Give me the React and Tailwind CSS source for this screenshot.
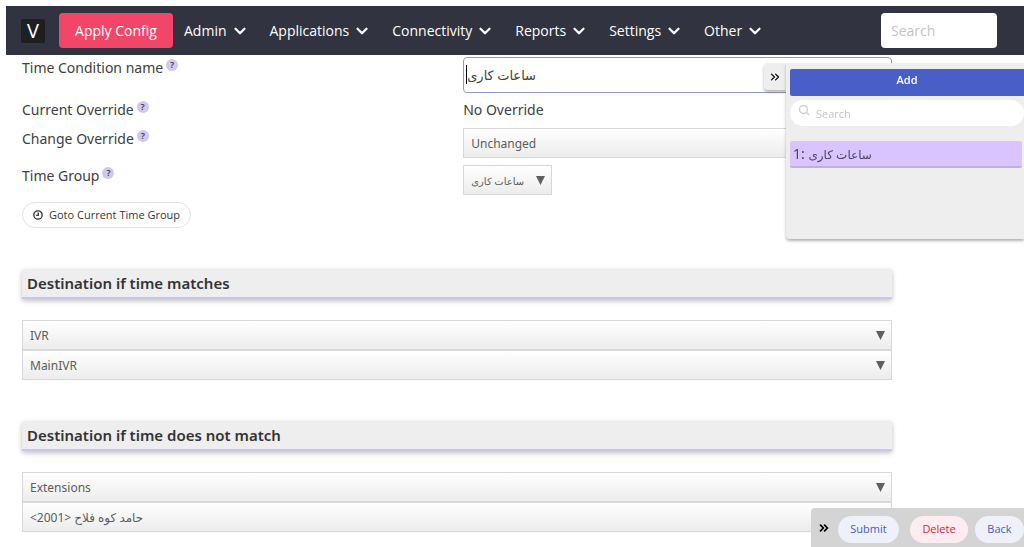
import React, { useState } from "react";
import { ChevronDown, ChevronsRight, Search } from "lucide-react";

const menus = ["Admin", "Applications", "Connectivity", "Reports", "Settings", "Other"];

function Help({ topic }) {
  return (
    <button
      type="button"
      aria-label={`Help: ${topic}`}
      className="mt-0.5 ml-[3px] flex size-3 items-center justify-center rounded-full bg-[#d0c9ee] text-[9px] leading-3 font-semibold text-[#3c3760]"
    >
      ?
    </button>
  );
}

function Label({ htmlFor, children }) {
  return (
    <div className="flex items-start">
      <label htmlFor={htmlFor} className="text-sm leading-[22px]">
        {children}
      </label>
      <Help topic={children} />
    </div>
  );
}

function ClockIcon() {
  return (
    <svg
      viewBox="0 0 12 12"
      aria-hidden="true"
      className="size-2.5 fill-none stroke-current stroke-[1.6]"
    >
      <circle cx="6" cy="6" r="5" />
      <path d="M6.3 3v3.5H3.8" />
    </svg>
  );
}

function Select({ id, label, options, small }) {
  return (
    <div className={small ? "relative w-[89px]" : "relative w-full"}>
      <select
        id={id}
        aria-label={label}
        className={`block h-[30px] w-full appearance-none border border-[#d8d8d8] bg-linear-to-b from-white to-[#ececec] pt-0.5 pl-[7px] text-[#5c5c5c] outline-none ${
          small ? "text-[10px]" : "text-xs"
        }`}
      >
        {options.map((option) => (
          <option key={option}>{option}</option>
        ))}
      </select>
      <svg
        viewBox="0 0 8 8"
        aria-hidden="true"
        className="pointer-events-none absolute top-[11px] right-[7px] size-[9px] fill-[#5f5f5f]"
      >
        <path d="M0 0h8L4 8z" />
      </svg>
    </div>
  );
}

function SectionTitle({ children }) {
  return (
    <h2 className="rounded-t-xs border-b-2 border-[#cbc6ea] bg-[#eeeeee] px-[5px] py-px text-[15px] leading-[26px] font-semibold text-[#333] shadow-[0_2px_5px_rgba(0,0,0,0.25)]">
      {children}
    </h2>
  );
}

function Header() {
  return (
    <header className="mt-1.5 ml-1.5 flex h-[49px] items-center bg-[#313340] pr-[27px] pl-[15px] font-['Open_Sans','Noto_Sans',sans-serif] text-white">
      <a
        href="#home"
        className="flex size-6 items-center justify-center rounded-xs bg-[#1e1f20] text-xl leading-6"
      >
        V
      </a>
      <button type="button" className="ml-3.5 h-[35px] w-[114px] rounded-sm bg-[#f14668] text-sm">
        Apply Config
      </button>
      <nav className="ml-[11px] flex gap-[21px]">
        {menus.map((menu) => (
          <button key={menu} type="button" className="flex items-center gap-1 text-sm">
            {menu}
            <ChevronDown size={18} strokeWidth={3} />
          </button>
        ))}
      </nav>
      <input
        type="search"
        aria-label="Search menu"
        placeholder="Search"
        className="ml-auto h-[35px] w-[116px] rounded-sm bg-white px-2.5 text-sm text-[#363636] outline-none placeholder:text-[#c4c4c8]"
      />
    </header>
  );
}

function SidePanel() {
  return (
    <aside className="fixed top-[63px] right-0 flex items-start">
      <button
        type="button"
        aria-label="Hide list"
        className="flex h-[27px] w-[22px] items-center justify-center rounded-l-sm bg-[#eeeeee] text-black shadow-[0_2px_3px_rgba(0,0,0,0.3)]"
      >
        <ChevronsRight size={14} strokeWidth={2} />
      </button>
      <div className="relative h-[176px] w-[238px] rounded-bl-sm bg-[#eeeeee] pt-1.5 pl-1 font-['Open_Sans','Noto_Sans',sans-serif] shadow-[0_2px_3px_rgba(0,0,0,0.3)]">
        <a
          href="#add"
          className="block h-[27px] rounded-l-xs bg-[#485fc7] text-center text-[11px] leading-[22px] font-semibold text-white"
        >
          Add
        </a>
        <div className="relative mt-1">
          <Search size={12} strokeWidth={3} className="absolute top-1 left-2 text-[#d0d0d0]" />
          <input
            type="search"
            aria-label="Search time conditions"
            placeholder="Search"
            className="block h-[26px] w-full rounded-full bg-white pl-[26px] text-[11px] outline-none placeholder:text-[#c4c4c4]"
          />
        </div>
        <a
          href="#time-condition-1"
          className="mt-[15px] mr-0.5 block h-[27px] rounded-xs border-b-2 border-[#bfb0da] bg-[#d9c4ff] px-[3px] font-['Noto_Sans','DejaVu_Sans',sans-serif] text-sm leading-[25px] text-[#4b4460]"
        >
          1: <span className="text-xs">ساعات کاری</span>
        </a>
      </div>
    </aside>
  );
}

function ActionBar() {
  return (
    <div className="fixed right-0 bottom-0 flex h-[39px] items-start rounded-tl-sm bg-[#d4d4d4] pt-2 pl-1.5 font-['Open_Sans','Noto_Sans',sans-serif] text-[11px]">
      <button type="button" aria-label="Hide actions" className="mt-[5px] mr-[7px] text-black">
        <ChevronsRight size={14} strokeWidth={3} />
      </button>
      <button type="submit" form="time-condition" className="h-[27px] w-[61px] rounded-full bg-[#eff1fa] text-[#4a5cb5]">
        Submit
      </button>
      <button type="button" className="ml-[11px] h-[27px] w-[58px] rounded-full bg-[#feecf0] text-[#cc1f46]">
        Delete
      </button>
      <button type="button" className="ml-[7px] h-[27px] w-[49px] rounded-full bg-[#eff1fa] text-[#4a5cb5]">
        Back
      </button>
    </div>
  );
}

export default function App() {
  const [name, setName] = useState("ساعات کاری");

  return (
    <div className="bg-white font-['Noto_Sans','DejaVu_Sans',sans-serif] text-[#404040]">
      <Header />
      <form id="time-condition" className="ml-[22px] w-[85%] pb-3">
        <div className="grid grid-cols-2 gap-x-3 pt-0.5">
          <Label htmlFor="name">Time Condition name</Label>
          <div className="relative">
            <input
              id="name"
              value={name}
              onChange={(event) => setName(event.target.value)}
              className="block h-9 w-full rounded-sm border border-[#8f9bbd] px-[3px] text-[13px] outline-none"
            />
            <span aria-hidden="true" className="absolute top-2 left-[3px] h-[19px] w-px bg-black" />
          </div>
        </div>
        <div className="mt-1.5 grid grid-cols-2 gap-x-3">
          <Label>Current Override</Label>
          <div className="text-sm leading-[22px]">No Override</div>
        </div>
        <div className="mt-[7px] grid grid-cols-2 gap-x-3">
          <Label htmlFor="override">Change Override</Label>
          <Select id="override" options={["Unchanged"]} />
        </div>
        <div className="mt-[7px] grid grid-cols-2 gap-x-3">
          <Label htmlFor="group">Time Group</Label>
          <Select id="group" options={["ساعات کاری"]} small />
        </div>
        <a
          href="#time-group"
          className="mt-[7px] inline-flex h-[26px] items-center gap-1.5 rounded-full border border-[#e2e2e2] px-2.5 font-['Open_Sans','Noto_Sans',sans-serif] text-[11px] text-[#363636]"
        >
          <ClockIcon />
          Goto Current Time Group
        </a>

        <section className="mt-[41px]">
          <SectionTitle>Destination if time matches</SectionTitle>
          <div className="mt-[21px]">
            <Select label="Match destination type" options={["IVR"]} />
            <Select label="Match destination" options={["MainIVR"]} />
          </div>
        </section>
        <section className="mt-[41px]">
          <SectionTitle>Destination if time does not match</SectionTitle>
          <div className="mt-[21px]">
            <Select label="No match destination type" options={["Extensions"]} />
            <Select label="No match destination" options={["<2001> حامد کوه فلاح"]} />
          </div>
        </section>
      </form>
      <SidePanel />
      <ActionBar />
    </div>
  );
}
